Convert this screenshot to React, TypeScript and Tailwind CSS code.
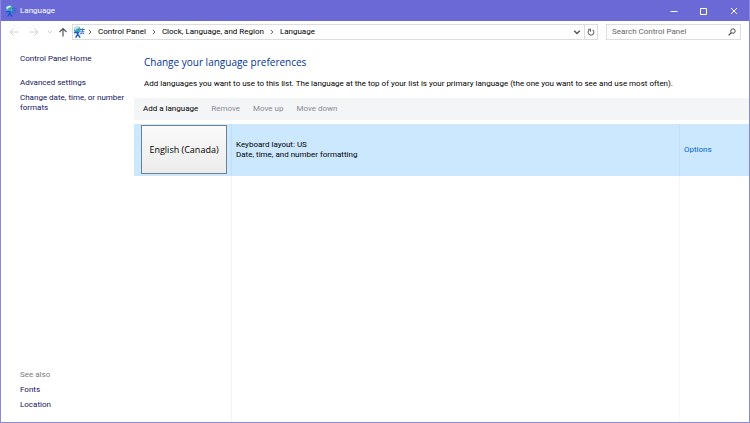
import type { ReactNode } from "react";

const crumbs = ["Control Panel", "Clock, Language, and Region", "Language"];

const languages = [
  {
    name: "English (Canada)",
    details: ["Keyboard layout: US", "Date, time, and number formatting"],
  },
];

const LanguageIcon = ({ className }: { className: string }) => (
  <svg viewBox="0 0 12 12" className={className} aria-hidden="true">
    <circle cx="4.3" cy="3.8" r="3.4" fill="#49a8ea" />
    <path d="M1.2 2.8C2.3.8 4.6.2 6 1L4.8 2.4 3 2.8 2.4 4.6Z" fill="#e6f8d8" />
    <path d="M4.2 3 6.4 2.6 7 4.2 5.2 5.6 4 4.6Z" fill="#3fae5b" />
    <path
      d="M1 6.8 3.6 6.2 6 6.8M4.6 6.4V8.6L2.6 11.6M4.8 8.4 7.2 11.6"
      fill="none"
      stroke="#1b5cc8"
      strokeWidth="1.5"
    />
    <path
      d="M7 3.5H11.8M7.4 5.8H11.4M6.8 8 9.2 7 11 7.8M9.4 2.4V5.6"
      fill="none"
      stroke="#2d6fd0"
      strokeWidth="1"
    />
  </svg>
);

const Icon = ({ className, children }: { className: string; children: ReactNode }) => (
  <svg
    viewBox="0 0 10 10"
    className={className}
    fill="none"
    stroke="currentColor"
    aria-hidden="true"
  >
    {children}
  </svg>
);

const TitleBar = () => (
  <header className="flex h-[21px] items-center bg-[#6b69d6] text-white">
    <LanguageIcon className="ml-1 h-3 w-3" />
    <h1 className="ml-[3px] flex-1">Language</h1>
    <button aria-label="Minimize" className="flex h-5 w-[30px] items-center justify-center">
      <Icon className="h-[10px] w-[10px]">
        <path d="M1.5 5.5H8.5" />
      </Icon>
    </button>
    <button aria-label="Maximize" className="flex h-5 w-[30px] items-center justify-center">
      <Icon className="h-[10px] w-[10px]">
        <path d="M1.5 2.5H7.5V8.5H1.5Z" />
      </Icon>
    </button>
    <button aria-label="Close" className="flex h-5 w-[30px] items-center justify-center">
      <Icon className="h-[10px] w-[10px]">
        <path d="M2 2 8 8M8 2 2 8" />
      </Icon>
    </button>
  </header>
);

const AddressBar = () => (
  <div className="flex h-[22px] items-center px-2">
    <button aria-label="Back" className="mr-[10px] text-[#d2d2d2]">
      <Icon className="h-[10px] w-[10px]">
        <path d="M9.5 5H1M4.5 1.5 1 5 4.5 8.5" />
      </Icon>
    </button>
    <button aria-label="Forward" className="mr-2 text-[#d2d2d2]">
      <Icon className="h-[10px] w-[10px]">
        <path d="M.5 5H9M5.5 1.5 9 5 5.5 8.5" />
      </Icon>
    </button>
    <button aria-label="Recent locations" className="mr-[5px] text-[#c8c8c8]">
      <Icon className="h-[6px] w-[6px]">
        <path d="M1.5 3 5 6.5 8.5 3" strokeWidth="1.6" />
      </Icon>
    </button>
    <button aria-label="Up" className="mr-1 text-[#555555]">
      <Icon className="h-[10px] w-[10px]">
        <path d="M5 9.5V1.5M1.5 5 5 1.5 8.5 5" strokeWidth="1.2" />
      </Icon>
    </button>
    <div className="flex h-4 flex-1 items-center border border-[#dddddd]">
      <LanguageIcon className="h-3 w-3" />
      <nav aria-label="Breadcrumb" className="flex flex-1 items-center">
        {crumbs.map((crumb) => (
          <span key={crumb} className="flex items-center pl-[5px] first:pl-[2px]">
            <Icon className="mr-[5px] h-[6px] w-[6px] text-[#555555]">
              <path d="M3 1.5 6.5 5 3 8.5" strokeWidth="1.6" />
            </Icon>
            <a href="#">{crumb}</a>
          </span>
        ))}
      </nav>
      <button aria-label="Previous locations" className="pr-[3px] pl-[5px] text-[#555555]">
        <Icon className="h-2 w-2">
          <path d="M1.5 3.5 5 7 8.5 3.5" strokeWidth="1.8" />
        </Icon>
      </button>
      <button
        aria-label="Refresh"
        className="flex h-full w-[13px] items-center justify-center border-l border-[#dddddd] text-[#666666]"
      >
        <Icon className="h-2 w-2">
          <path d="M3 2.4A3.6 3.6 0 1 0 7 2.4M1.4 1.6H4.4V4.6" strokeWidth="1.3" />
        </Icon>
      </button>
    </div>
    <label className="ml-2 flex h-4 w-[135px] items-center border border-[#dddddd] pr-1 pl-[5px]">
      <input
        type="text"
        aria-label="Search Control Panel"
        placeholder="Search Control Panel"
        className="min-w-0 flex-1 outline-none placeholder:text-[#666666]"
      />
      <Icon className="h-2 w-2 text-[#444444]">
        <circle cx="6.2" cy="3.8" r="2.8" strokeWidth="1.2" />
        <path d="M4.2 5.8 .8 9.2" strokeWidth="1.5" />
      </Icon>
    </label>
  </div>
);

const Sidebar = () => (
  <aside className="flex w-[133px] shrink-0 flex-col justify-between pt-[11px] pb-3 pl-[19px] text-[#15155f]">
    <nav aria-label="Tasks" className="flex flex-col items-start">
      <a href="#">Control Panel Home</a>
      <a href="#" className="mt-[14px]">
        Advanced settings
      </a>
      <a href="#" className="mt-[5px]">
        Change date, time, or number formats
      </a>
    </nav>
    <nav aria-label="See also" className="flex flex-col items-start gap-[5px]">
      <h3 className="text-[#7b7b7b]">See also</h3>
      <a href="#">Fonts</a>
      <a href="#">Location</a>
    </nav>
  </aside>
);

const App = () => {
  return (
    <div className="flex min-h-screen flex-col border border-t-0 border-[#8b89de] bg-white font-['Roboto','Open_Sans',sans-serif] text-[8px] leading-[10px] text-black">
      <TitleBar />
      <AddressBar />
      <div className="flex flex-1">
        <Sidebar />
        <main className="flex min-w-0 flex-1 flex-col">
          <h2 className="mt-3 ml-[10px] font-['Open_Sans',sans-serif] text-[10px] leading-[14px] text-[#003399]">
            Change your language preferences
          </h2>
          <p className="mt-[10px] ml-[10px]">
            Add languages you want to use to this list. The language at the top of your list is
            your primary language (the one you want to see and use most often).
          </p>
          <div className="mt-[9px] flex h-[22px] items-center gap-[13px] bg-[#f4f5f7] px-[9px]">
            <button>Add a language</button>
            <button disabled className="text-[#8a8a98]">
              Remove
            </button>
            <button disabled className="text-[#8a8a98]">
              Move up
            </button>
            <button disabled className="text-[#8a8a98]">
              Move down
            </button>
          </div>
          <div className="mt-1 flex flex-1 flex-col">
            {languages.map((language) => (
              <div key={language.name} className="flex h-[52px] bg-[#cce8ff]">
                <div className="w-[98px] border-r border-[#c0defa] py-[1px] pl-[7px]">
                  <button className="h-[49px] w-[86px] border border-[#6f8291] bg-linear-to-b from-[#fafafa] to-[#ececec] font-['Open_Sans',sans-serif] text-[9px]">
                    {language.name}
                  </button>
                </div>
                <div className="flex flex-1 flex-col justify-center pl-1">
                  {language.details.map((detail) => (
                    <p key={detail}>{detail}</p>
                  ))}
                </div>
                <div className="flex w-[70px] items-center border-l border-[#c0defa] pl-1">
                  <a href="#" className="text-[#0066cc]">
                    Options
                  </a>
                </div>
              </div>
            ))}
            <div className="flex flex-1">
              <div className="w-[98px] border-r border-[#edf4fb]" />
              <div className="flex-1" />
              <div className="w-[70px] border-l border-[#f4f8fc]" />
            </div>
          </div>
        </main>
      </div>
    </div>
  );
};

export default App;
